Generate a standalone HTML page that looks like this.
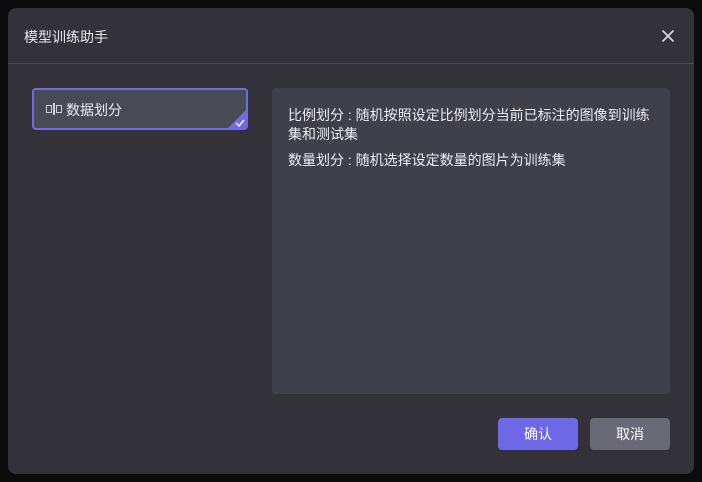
<!DOCTYPE html>
<html><head><meta charset="utf-8"><style>
*{margin:0;padding:0;box-sizing:border-box}
body{width:702px;height:482px;background:#0b0b0c;font-family:"Liberation Sans","Noto Sans CJK SC",sans-serif;position:relative;overflow:hidden;color:#e8e8ec}
.dlg{position:absolute;left:8px;top:8px;width:686px;height:466px;background:#323238;border-radius:8px}
.title{position:absolute;left:16px;top:19px;font-size:14px;color:#e8e8ee}
.close{position:absolute;left:652px;top:20px}
.hr{position:absolute;left:0;top:55px;width:686px;height:1px;background:#48484f}
.card{position:absolute;left:24px;top:80px;width:216px;height:42px;background:#4a4a55;border:2px solid #7269e6;border-radius:4px;overflow:hidden}
.card span{position:absolute;left:32px;top:10px;font-size:14px;color:#ececf2}
.tri{position:absolute;right:0;bottom:0;width:0;height:0;border-left:18px solid transparent;border-bottom:18px solid #7269e6}
.panel{position:absolute;left:264px;top:80px;width:398px;height:306px;background:#40404a;border-radius:4px;padding:18px 16px 0 16px;font-size:14px;line-height:19px;color:#ececf2}
.panel p{margin-bottom:7px}
.btn{position:absolute;top:410px;width:80px;height:32px;border-radius:4px;font-size:14px;text-align:center;line-height:32px;color:#fff}
</style></head><body>
<div class="dlg">
<div class="title">模型训练助手</div>
<svg class="close" width="16" height="16" viewBox="0 0 16 16"><path d="M2.5 2.5L13.5 13.5M13.5 2.5L2.5 13.5" stroke="#d8d8de" stroke-width="1.8"/></svg>
<div class="hr"></div>
<div class="card">
<svg style="position:absolute;left:12px;top:13px" width="16" height="12" viewBox="0 0 16 12"><rect x="0.5" y="2.5" width="5" height="7" fill="none" stroke="#cfcfd6"/><rect x="10.5" y="2.5" width="5" height="7" fill="none" stroke="#cfcfd6"/><rect x="7" y="0" width="2" height="12" fill="#cfcfd6"/></svg>
<span>数据划分</span>
<div class="tri"></div>
<svg style="position:absolute;right:1px;bottom:1px" width="10" height="8" viewBox="0 0 10 8"><path d="M1 4L4 7L9 1" stroke="#fff" stroke-width="1.4" fill="none"/></svg>
</div>
<div class="panel">
<p>比例划分 : 随机按照设定比例划分当前已标注的图像到训练集和测试集</p>
<p>数量划分 : 随机选择设定数量的图片为训练集</p>
</div>
<div class="btn" style="left:490px;background:#6e68e6">确认</div>
<div class="btn" style="left:582px;background:#6a6a76">取消</div>
</div>
</body></html>
